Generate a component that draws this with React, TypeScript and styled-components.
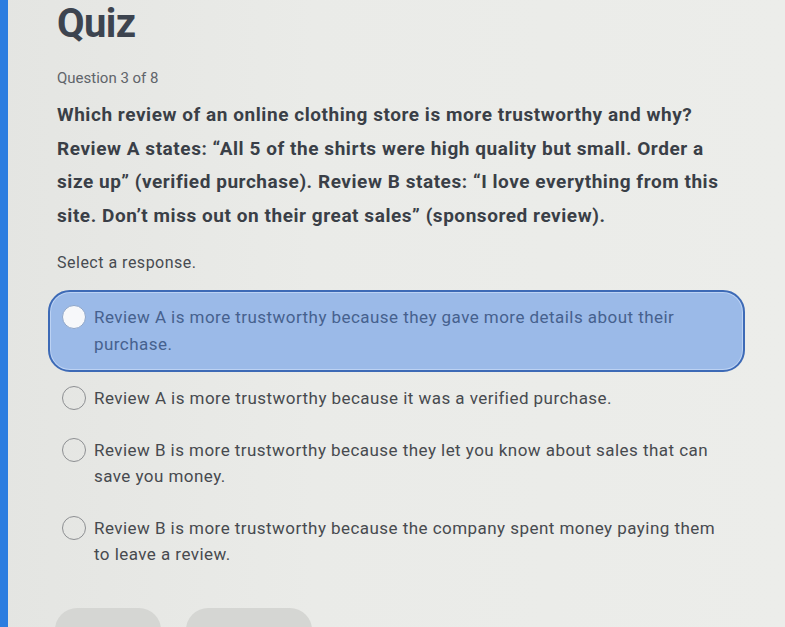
import React from "react";
import styled, { createGlobalStyle } from "styled-components";

const Global = createGlobalStyle`
  html, body {
    margin: 0;
    padding: 0;
    width: 785px;
    height: 627px;
    overflow: hidden;
    background: #e9eae7;
  }
  * { box-sizing: border-box; }
`;

const Screen = styled.div`
  display: flex;
  width: 785px;
  height: 627px;
  overflow: hidden;
  background: linear-gradient(90deg, #e4e5e2 0%, #eaebe8 40%, #ecedea 100%);
  font-family: Roboto, "Liberation Sans", sans-serif;
`;

const SideBar = styled.div`
  flex: 0 0 8px;
  background: #2b7de0;
`;

const Main = styled.main`
  flex: 1;
  display: flex;
  flex-direction: column;
  padding: 2px 0 0 40px;
`;

const Title = styled.h1`
  margin: 0 0 0 9px;
  font-size: 40px;
  line-height: 44px;
  font-weight: 700;
  color: #3d444f;
  letter-spacing: -0.6px;
`;

const Counter = styled.div`
  margin: 22px 0 0 9px;
  font-size: 15px;
  line-height: 20px;
  color: #60646a;
`;

const Prompt = styled.p`
  margin: 10px 0 0 9px;
  width: 676px;
  font-size: 19px;
  line-height: 33.5px;
  font-weight: 700;
  letter-spacing: 0.55px;
  color: #3a3f47;
`;

const Instruction = styled.div`
  margin: 20px 0 0 9px;
  font-size: 16px;
  line-height: 22px;
  letter-spacing: 0.5px;
  color: #474b51;
`;

const Options = styled.div`
  display: flex;
  flex-direction: column;
  margin-top: 16px;
  width: 697px;
`;

const Option = styled.label<{ $selected?: boolean }>`
  display: flex;
  align-items: flex-start;
  gap: 8px;
  padding: ${(p) => (p.$selected ? "12px" : "11px 12px")};
  border: 2px solid ${(p) => (p.$selected ? "#3d6ab6" : "transparent")};
  border-radius: 22px;
  background: ${(p) => (p.$selected ? "#9bbae8" : "transparent")};
  box-shadow: ${(p) => (p.$selected ? "inset 0 0 0 1px #bcd2f3" : "none")};
  cursor: pointer;
`;

const Radio = styled.span<{ $selected?: boolean }>`
  flex: 0 0 24px;
  width: 24px;
  height: 24px;
  margin-top: 1px;
  border-radius: 50%;
  border: 1.5px solid ${(p) => (p.$selected ? "#8ea6c9" : "#8d8f92")};
  background: ${(p) => (p.$selected ? "#f7f8fa" : "transparent")};
`;

const OptionText = styled.span<{ $selected?: boolean }>`
  width: 632px;
  font-size: 17px;
  line-height: ${(p) => (p.$selected ? "27px" : "26px")};
  letter-spacing: 0.45px;
  color: ${(p) => (p.$selected ? "#46618e" : "#474a4f")};
`;

const Actions = styled.div`
  display: flex;
  gap: 25px;
  margin-top: auto;
  padding-left: 7px;
  height: 19px;
  align-items: flex-start;
`;

const GhostButton = styled.div<{ $w: number }>`
  width: ${(p) => p.$w}px;
  height: 44px;
  border-radius: 22px;
  background: #d5d6d3;
`;

const answers = [
  "Review A is more trustworthy because they gave more details about their purchase.",
  "Review A is more trustworthy because it was a verified purchase.",
  "Review B is more trustworthy because they let you know about sales that can save you money.",
  "Review B is more trustworthy because the company spent money paying them to leave a review.",
];

export default function App() {
  const selected = 0;
  return (
    <>
      <Global />
      <Screen>
        <SideBar />
        <Main>
          <Title>Quiz</Title>
          <Counter>Question 3 of 8</Counter>
          <Prompt>
            Which review of an online clothing store is more trustworthy and why? Review A
            states: “All 5 of the shirts were high quality but small. Order a size up” (verified
            purchase). Review B states: “I love everything from this site. Don’t miss out on their
            great sales” (sponsored review).
          </Prompt>
          <Instruction>Select a response.</Instruction>
          <Options>
            {answers.map((a, i) => (
              <Option key={i} $selected={i === selected}>
                <Radio $selected={i === selected} />
                <OptionText $selected={i === selected}>{a}</OptionText>
              </Option>
            ))}
          </Options>
          <Actions>
            <GhostButton $w={106} />
            <GhostButton $w={126} />
          </Actions>
        </Main>
      </Screen>
    </>
  );
}
